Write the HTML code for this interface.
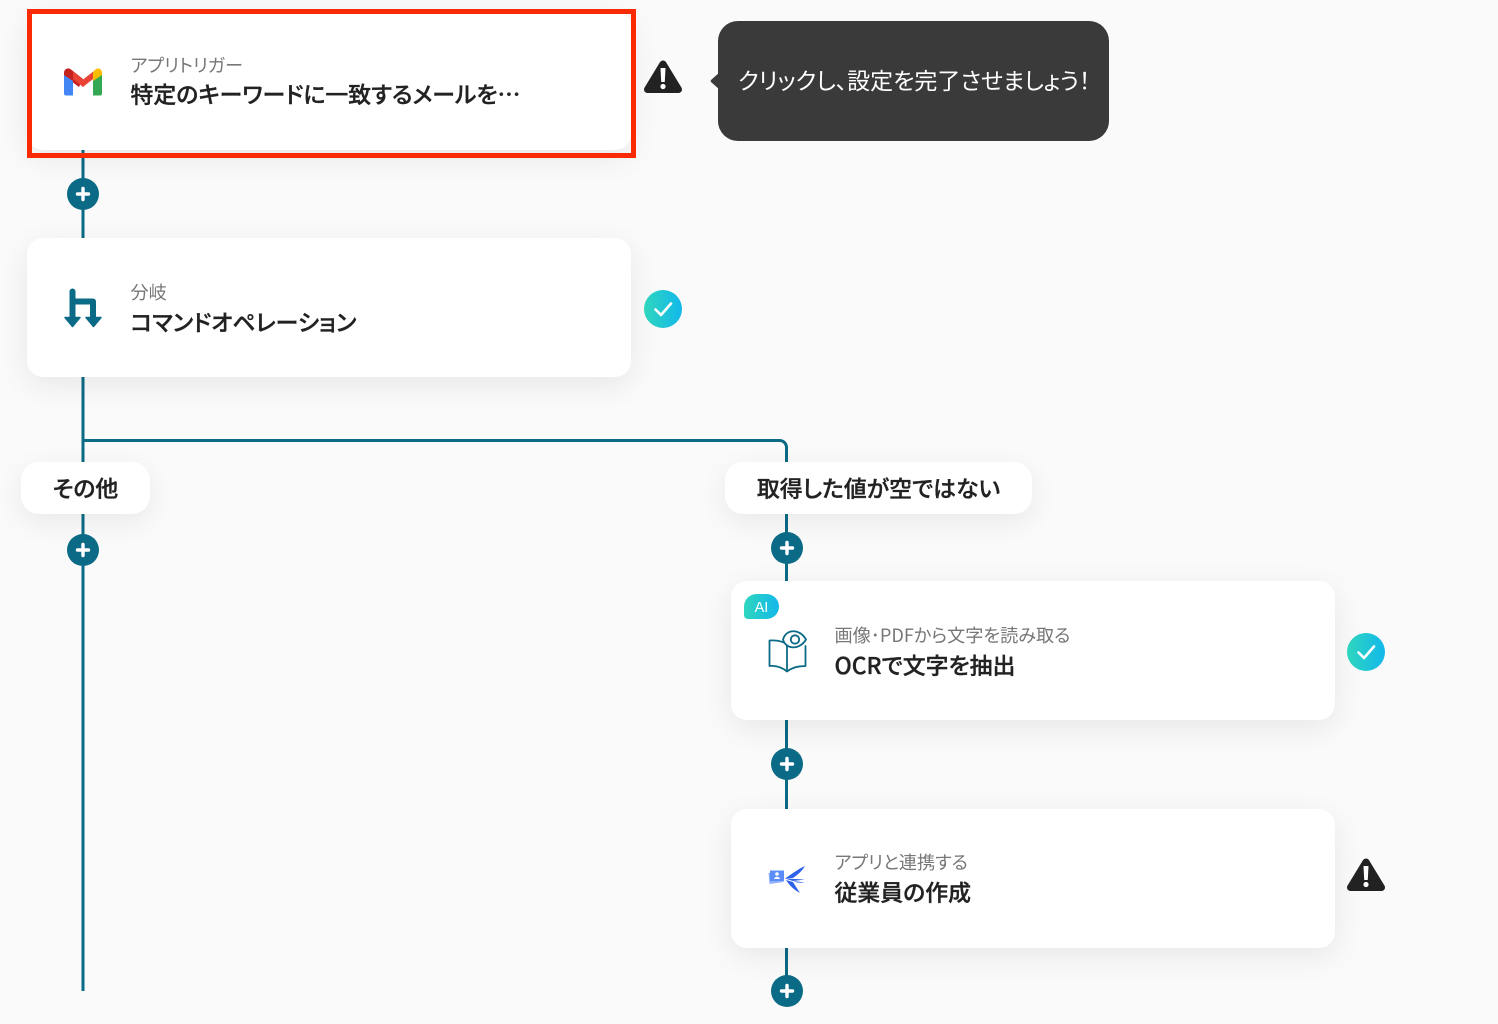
<!DOCTYPE html>
<html lang="ja"><head><meta charset="utf-8">
<style>
*{box-sizing:border-box;margin:0;padding:0}
html,body{width:1498px;height:1024px;overflow:hidden;background:#fafafa;font-family:"Liberation Sans","Noto Sans CJK JP",sans-serif;color:#222}
body{position:relative}
.a{position:absolute}
.card{position:absolute;width:604px;height:139px;background:#fff;border-radius:16px;box-shadow:0 8px 30px rgba(0,0,0,.08)}
.t1,.t2{position:absolute;white-space:nowrap;font-family:"Noto Sans CJK JP",sans-serif;font-feature-settings:"palt"}
.t1{font-size:18.15px;line-height:22px;color:#777;font-weight:400}
.t2{font-size:22.9px;line-height:30px;color:#222;font-weight:500;-webkit-text-stroke:.35px #222}
.pill{position:absolute;height:52px;background:#fff;border-radius:18px;box-shadow:0 8px 28px rgba(0,0,0,.07);font:500 22.9px/50px "Noto Sans CJK JP",sans-serif;-webkit-text-stroke:.35px #222;font-feature-settings:"palt";text-align:center;white-space:nowrap}
svg{position:absolute;display:block;overflow:visible}
</style></head><body>

<svg style="left:0;top:0" width="1498" height="1024" fill="none" stroke="#0b6a85" stroke-width="3">
<path d="M83 150V240M83 377V463M83 513V991"/>
<path d="M83 440.500H779.500a7 7 0 0 1 7 7V464"/>
<path d="M786.500 513V583M786.500 720V810M786.500 948V992"/>
</svg>

<div class="card" style="left:27px;top:11px"></div>
<div class="a" style="left:27px;top:9px;width:609px;height:149px;border:5px solid #fa2a05"></div>
<svg style="left:64px;top:68px" width="38" height="28" viewBox="0 0 38 28">
<path d="M0 5C0 1 4-1 7 1.500L19 11 15 19 0 8Z" fill="#c5221f"/>
<path d="M0 7V25.500A2 2 0 0 0 2 27.500H9V13Z" fill="#4285f4"/>
<path d="M9 11 19 19 29 11V3.800L19 11.500 9 3.800Z" fill="#ea4335"/>
<path d="M29 3.800 31.500 1.500C34-1 38 1 38 5V8L29 14Z" fill="#fbbc04"/>
<path d="M29 13 38 7V25.500A2 2 0 0 1 36 27.500H29Z" fill="#34a853"/>
</svg>
<div class="t1" style="left:130.500px;top:54px">アプリトリガー</div>
<div class="t2" style="left:130.500px;top:78px">特定のキーワードに一致するメールを…</div>

<svg style="left:644px;top:60px" width="38" height="34" viewBox="0 0 38 34">
<path d="M19 4 34.500 29.500H3.500Z" fill="#222" stroke="#222" stroke-width="7" stroke-linejoin="round"/>
<path d="M17 8.500H21L20.300 21.500H17.700Z" fill="#fff" stroke="#fff" stroke-width="1" stroke-linejoin="round"/><circle cx="19" cy="26.500" r="2.600" fill="#fff"/>
</svg>

<svg style="left:710px;top:72px" width="12" height="18" viewBox="0 0 12 18"><path d="M10 0 1 8a1.500 1.500 0 0 0 0 2L10 18Z" fill="#3a3a3a"/></svg>
<div class="a" style="left:718px;top:21px;width:391px;height:120px;background:#3a3a3a;border-radius:20px;color:#fff;font:400 23px/116px 'Noto Sans CJK JP',sans-serif;font-feature-settings:'palt';padding-left:20px;white-space:nowrap">クリックし、設定を完了させましょう！</div>

<svg style="left:67px;top:178px" width="32" height="32"><circle cx="16" cy="16" r="16" fill="#0b6a85"/><path d="M16 10.500V21.500M10.500 16H21.500" stroke="#fff" stroke-width="3.400" stroke-linecap="round"/></svg>

<div class="card" style="left:27px;top:238px"></div>
<svg style="left:64px;top:288px" width="38" height="40" viewBox="0 0 38 40">
<path d="M8.500 3.500V31M8.500 13.500H29V31" fill="none" stroke="#0b6a85" stroke-width="6" stroke-linecap="round" stroke-linejoin="round"/>
<path d="M1 29.500H16L8.500 38.500ZM22 29.500H37L29.500 38.500Z" fill="#0b6a85" stroke="#0b6a85" stroke-width="1.500" stroke-linejoin="round"/>
</svg>
<div class="t1" style="left:130.500px;top:281px">分岐</div>
<div class="t2" style="left:130.500px;top:306px">コマンドオペレーション</div>

<svg style="left:644px;top:290px" width="38" height="38" viewBox="0 0 38 38"><defs><linearGradient id="g" x1="0" x2="1" y1=".2" y2=".2"><stop offset="0" stop-color="#2fd6bd"/><stop offset="1" stop-color="#12b8ea"/></linearGradient></defs><circle cx="19" cy="19" r="19" fill="url(#g)"/><path d="M11.500 19.500 17 25 27 13.500" fill="none" stroke="#fff" stroke-width="2.600" stroke-linecap="round" stroke-linejoin="round"/></svg>

<div class="pill" style="left:21px;top:462px;width:129px">その他</div>
<div class="pill" style="left:725px;top:462px;width:307px">取得した値が空ではない</div>

<svg style="left:67px;top:534px" width="32" height="32"><circle cx="16" cy="16" r="16" fill="#0b6a85"/><path d="M16 10.500V21.500M10.500 16H21.500" stroke="#fff" stroke-width="3.400" stroke-linecap="round"/></svg>
<svg style="left:770.500px;top:532px" width="32" height="32"><circle cx="16" cy="16" r="16" fill="#0b6a85"/><path d="M16 10.500V21.500M10.500 16H21.500" stroke="#fff" stroke-width="3.400" stroke-linecap="round"/></svg>

<div class="card" style="left:731px;top:581px"></div>
<div class="a" style="left:744px;top:594px;width:35px;height:25px;border-radius:13px 13px 13px 4px;background:linear-gradient(90deg,#2fd6bd,#12b8ea);color:#fff;font:400 14.500px/28px 'Liberation Sans',sans-serif;text-align:center">AI</div>
<svg style="left:767px;top:629px" width="42" height="46" viewBox="0 0 42 46" fill="none" stroke="#0b6a85" stroke-width="1.800" stroke-linejoin="round" stroke-linecap="round">
<path d="M20 15C14 11.500 8 11 2.500 11.500V37C8 36.500 14 37.500 20 42.500 25 38.500 32 37 38.500 37V17"/>
<path d="M20 15V42"/>
<path d="M16 10.500C19-.5 33-.5 39 10.500 33 21 19 21 16 10.500Z" fill="#fff"/>
<circle cx="28" cy="10.500" r="4.200"/>
</svg>
<div class="t1" style="left:834.500px;top:624px">画像･PDFから文字を読み取る</div>
<div class="t2" style="left:834.500px;top:649px">OCRで文字を抽出</div>

<svg style="left:1347px;top:633px" width="38" height="38" viewBox="0 0 38 38"><circle cx="19" cy="19" r="19" fill="url(#g)"/><path d="M11.500 19.500 17 25 27 13.500" fill="none" stroke="#fff" stroke-width="2.600" stroke-linecap="round" stroke-linejoin="round"/></svg>

<svg style="left:770.500px;top:748px" width="32" height="32"><circle cx="16" cy="16" r="16" fill="#0b6a85"/><path d="M16 10.500V21.500M10.500 16H21.500" stroke="#fff" stroke-width="3.400" stroke-linecap="round"/></svg>

<div class="card" style="left:731px;top:809px"></div>
<svg style="left:767px;top:865px" width="40" height="30" viewBox="0 0 40 30">
<path d="M1.500 8 16 7 16.500 17 2.500 19Z" fill="#8fb0fb"/>
<path d="M3 5.500H17V16H3Z" fill="#5b8cf8"/>
<circle cx="10" cy="9" r="1.800" fill="#fff"/><path d="M7 14C7.500 11 12.500 11 13 14Z" fill="#fff"/>
<path d="M38 1C33 3 26 8 18 13.500L26 13C31 9.500 35 6 38 1ZM18 13.500 38 14.500 26 16ZM26 16 34 17 38 18 30 17.500ZM19 15 26 17C28.500 21 31 25 33 28 27 25 22 20 19 15Z" fill="#2d62ea"/>
</svg>
<div class="t1" style="left:834.500px;top:851px">アプリと連携する</div>
<div class="t2" style="left:834.500px;top:876px">従業員の作成</div>

<svg style="left:1347px;top:858px" width="38" height="34" viewBox="0 0 38 34">
<path d="M19 4 34.500 29.500H3.500Z" fill="#222" stroke="#222" stroke-width="7" stroke-linejoin="round"/>
<path d="M17 8.500H21L20.300 21.500H17.700Z" fill="#fff" stroke="#fff" stroke-width="1" stroke-linejoin="round"/><circle cx="19" cy="26.500" r="2.600" fill="#fff"/>
</svg>

<svg style="left:770.500px;top:975px" width="32" height="32"><circle cx="16" cy="16" r="16" fill="#0b6a85"/><path d="M16 10.500V21.500M10.500 16H21.500" stroke="#fff" stroke-width="3.400" stroke-linecap="round"/></svg>

</body></html>
